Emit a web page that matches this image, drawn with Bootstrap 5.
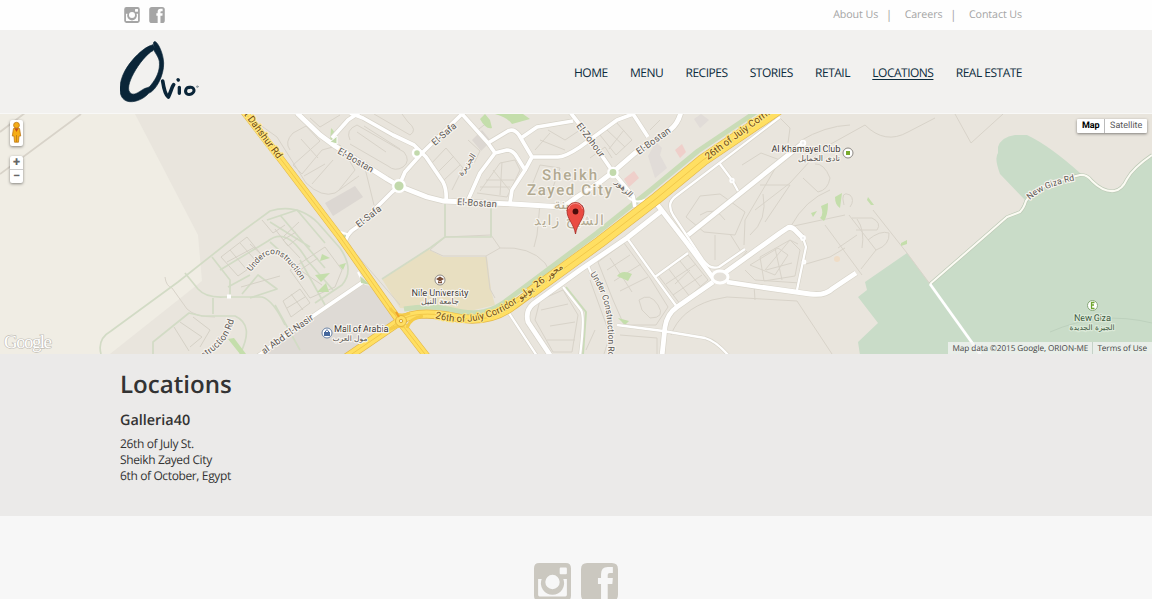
<!DOCTYPE html>
<html lang="en">
<head>
<meta charset="utf-8">
<meta name="viewport" content="width=device-width, initial-scale=1">
<title>Ovio - Locations</title>
<link href="https://cdn.jsdelivr.net/npm/bootstrap@5.3.0/dist/css/bootstrap.min.css" rel="stylesheet">
<style>
body{font-family:"Open Sans",sans-serif;background:#f7f7f7;color:#333;overflow:hidden;text-rendering:geometricPrecision}
a{color:inherit;text-decoration:none}
.wrap{max-width:936px}
.topbar{height:30px;background:#fefefe;color:#a5a5a5;font-size:10.7px;letter-spacing:-.1px}
.topbar .social{padding-left:4px;gap:9px}
.end-pad{padding-right:10px}
.sep{margin:-1px 12.5px 0 7.5px;font-size:12px}
.masthead{height:84px;background:#f2f1ef;border-bottom:1px solid #f8f8f7}
.mainnav{gap:22.3px;font-size:12px;color:#0c2b3d;padding-top:2px;letter-spacing:-.5px}
.mainnav .active{text-decoration:underline;text-underline-offset:1.5px}
.map{height:240px;background:#e9e5dd;overflow:hidden;font-family:Roboto,sans-serif}
.map>svg{display:block}
.places{height:162px;background:#ebeae9;padding-top:15px}
.places h1{font-size:24.1px;line-height:32px;font-weight:600;margin:0 0 12px}
.places h2{font-size:14.4px;line-height:18px;font-weight:600;margin:-1px 0 6px}
.places address{font-size:12px;line-height:16px;margin:0;letter-spacing:-.37px}
.foot{height:83px;padding-top:47px;gap:10px;color:#cbc8c0;overflow:hidden}
.ctl{background:#fff;border-radius:2px;box-shadow:0 1px 3px rgba(0,0,0,.45)}
.ctl-left{left:10px;top:6px;width:13px;gap:10px}
.zoomer{height:27px;color:#666;font:700 13px/13px Roboto,sans-serif}
.zoomer span+span{border-top:1px solid #ccc}
.maptype{right:5px;top:5px;height:14px;font-size:9px;line-height:15px;border-radius:1px;color:#565656}
.maptype span{padding:0 4.7px}
.maptype span:first-child{color:#000;border-right:1px solid #bbb}
.credit{right:0;bottom:0;height:12px;background:rgba(245,245,245,.72);font:8.2px/13px "Open Sans",sans-serif;letter-spacing:-.06px;color:#444;white-space:nowrap}
.credit span{padding:0 4px 0 4px}
.credit span+span{border-left:1px solid #c5d2c8;padding-right:5px}
.lbl{font-family:Roboto,"DejaVu Sans",sans-serif;font-size:9.4px;fill:#5a5652;stroke:#f6f3ee;stroke-width:2.4px;paint-order:stroke;stroke-linejoin:round}
.lbl .hw{fill:#6e4a16;stroke:#ffe680}
.lbl .ar{font-family:"DejaVu Sans",sans-serif;font-size:8px}
.lbl .city{font-size:15px;font-weight:500;fill:#b1a991}
.lbl .city-ar{font-family:"DejaVu Sans",sans-serif;font-size:14px;fill:#b1a991}
.lbl .poi{font-size:9.4px;fill:#3f3b38}
</style>
</head>
<body>
<svg width="0" height="0" class="position-absolute">
  <symbol id="ig" viewBox="0 0 36 37">
    <path fill="currentColor" fill-rule="evenodd" d="M5 0H31Q36 0 36 5V32Q36 37 31 37H5Q0 37 0 32V5Q0 0 5 0ZM26 4.500Q25 4.500 25 5.500V10Q25 11 26 11H31Q32 11 32 10V5.500Q32 4.500 31 4.500ZM4 15.500V31Q4 32.500 5.500 32.500H30.500Q32 32.500 32 31V15.500H28.500A11.300 11.300 0 1 1 7.500 15.500ZM18 11.500A7 7 0 1 0 18 25.500A7 7 0 1 0 18 11.500Z"/>
  </symbol>
  <symbol id="fb" viewBox="0 0 36 37">
    <path fill="currentColor" fill-rule="evenodd" d="M6 0H30Q36 0 36 6V31Q36 37 30 37H26V20.500H30.500L31 14.500H26V11.500Q26 9.800 28 9.800H31V4H26Q19.500 4 19.500 11V14.500H16.500V20.500H19.500V37H6Q0 37 0 31V6Q0 0 6 0Z"/>
  </symbol>
</svg>

<div class="topbar">
  <div class="container wrap h-100 d-flex justify-content-between align-items-center">
    <div class="social d-flex">
      <a href="#" class="d-flex" aria-label="Instagram"><svg width="16" height="16"><use href="#ig"/></svg></a>
      <a href="#" class="d-flex" aria-label="Facebook"><svg width="16" height="16"><use href="#fb"/></svg></a>
    </div>
    <div class="d-flex end-pad"><a href="#">About Us</a><span class="sep">|</span><a href="#">Careers</a><span class="sep">|</span><a href="#">Contact Us</a></div>
  </div>
</div>

<header class="masthead">
  <div class="container wrap h-100 d-flex justify-content-between align-items-center">
    <a href="#" class="d-flex" aria-label="Ovio">
      <svg width="82" height="64" viewBox="60 120 246 192" fill="none" stroke="#0a2538" stroke-linecap="round" stroke-linejoin="round">
        <path fill="#0a2538" stroke="#0a2538" stroke-width="2" d="M157 135C133 139 92 180 74 214C54 252 52 302 89 305C111 307 135 293 146 280C169 271 192 226 191 189C190 158 173 127 166 125C159 123 159 133 163 142C155 150 175 165 178 184C181 212 169 235 153 255C147 264 140 263 133 266C120 273 105 287 94 281C78 272 88 244 101 220C115 193 142 160 159 152C165 146 162 134 157 135Z"/>
        <path stroke-width="11" d="M188 243C191 263 196 285 205 291C211 280 216 260 221 254"/>
        <path stroke-width="10" d="M238 262V280M234 239L235 240"/>
        <path stroke-width="9" d="M270 262C258 260 253 274 260 281C269 287 283 280 282 270C281 263 275 260 267 263"/>
        <circle cx="292" cy="260" r="2.500" stroke-width="2" stroke="#687884"/>
      </svg>
    </a>
    <nav class="mainnav d-flex end-pad"><a href="#">HOME</a><a href="#">MENU</a><a href="#">RECIPES</a><a href="#">STORIES</a><a href="#">RETAIL</a><a href="#" class="active">LOCATIONS</a><a href="#">REAL ESTATE</a></nav>
  </div>
</header>

<section class="map position-relative">
  <svg width="1152" height="240" viewBox="0 114 1152 240" fill="none" stroke-linejoin="round">
    <defs>
      <g id="arterial">
        <path d="M297 113L320 135L335 146L387 179L399 186L427 197L443 201L513 204L563 207L577 197L600 182L613 172L635 153L670 130Q678 124 681 112"/>
        <path d="M713 278L687 243L653 199M660 212L627 238L580 270L533 304Q525 311 528 322L550 355"/>
        <path d="M723 274L780 233L786 229Q791 225 796 231L803 238M727 282L760 287L810 294Q825 296 832 289L856 273"/>
        <path d="M688 235L803 143M713 282L677 307Q667 314 665 327L662 356"/>
      </g>
      <g id="street">
        <path d="M332 138L348 120L360 112M350 113L363 118L393 135L414 145L426 157L443 182Q447 190 446 201"/>
        <path d="M464 112L422 153L405 172L399 186L392 192L357 227Q345 234 345 245"/>
        <path d="M462 114L488 143L495 153L507 150Q513 150 517 157L525 170L512 190L510 203M495 153L480 173L468 200"/>
        <path d="M488 143L508 131Q514 128 519 135L532 157L525 170M521 138L537 127L573 121M532 157H558Q565 157 580 147L617 120L633 114L648 137"/>
        <path d="M570 112L580 125L600 153L613 172L633 196L635 207M363 282L310 318L258 356"/>
      </g>
      <g id="lane">
        <path d="M627 238L655 277L677 307M655 277L688 253M803 238L806 247L797 290M563 287L581 310Q585 316 580 356"/>
        <path d="M780 117L676 196Q666 203 673 215L703 260Q710 270 719 267L745 249M720 164L732 180L738 191M617 325L663 331L705 338Q716 341 729 356M507 310L537 356M588 266L592 275"/>
      </g>
      <path id="hw1" d="M239 105L283 162L340 237L400 322L428 358"/>
      <path id="hw2" d="M346 358L400 321C410 313 430 313 448 316C480 324 500 316 514 305L600 242L657 198L703 160L780 108"/>
      <path id="p1" d="M236 104L290 176"/>
      <path id="p2" d="M337 153L382 179"/>
      <path id="p3" d="M359 228L396 199"/>
      <path id="p4" d="M435 146L466 119"/>
      <path id="p5" d="M457 205L510 208"/>
      <path id="p6" d="M576 126L605 164"/>
      <path id="p7" d="M639 155L684 123"/>
      <path id="p8" d="M708 160L792 98"/>
      <path id="p9" d="M435 318Q475 329 509 308Q516 304 530 293"/>
      <path id="p10" d="M590 274C603 294 610 306 608 366"/>
      <path id="p11" d="M251 272C270 246 280 246 306 288"/>
      <path id="p12" d="M185 370C222 349 229 338 234 320"/>
      <path id="p13" d="M238 373L314 319"/>
      <path id="p14" d="M1030 200Q1045 185 1084 179"/>
    </defs>

    <!-- land areas -->
    <path fill="#f0ede4" d="M0 114H135L198 235L202 281L110 354H0Z"/>
    <path fill="#dedad5" d="M363 284L374 288L398 322L350 356H260L310 320Z"/>
    <path fill="#e8dfc1" d="M382 279L428 249L443 257H487L491 290L495 305L470 311L400 308Z"/>
    <path fill="#c9dcc8" d="M907 253L865 282L867 290L858 297L878 323L858 342L860 355H1152V155L1132 172L1122 187Q1117 194 1103 190L1087 175L1080 173Q1050 146 1027 135H1015Q1001 137 998 147V153Q994 158 1000 174L1025 200L1020 212L1007 217L960 258L930 284Z"/>
    <path fill="#dcd7d2" d="M325 203L355 186L363 197L333 216ZM472 140L482 130L491 141L481 151Z"/>
    <path fill="#efcfca" d="M624 179L634 171L639 178L629 187ZM675 150L682 144L686 152L680 158Z"/>
    <path fill="#e1dcd8" d="M648 156L656 142L662 148L660 155L667 168L655 178ZM694 119L701 114L709 120L700 128Z"/>

    <!-- tracks and plot outlines -->
    <g stroke="#d8d3c9" stroke-width="1">
      <path stroke-width="1.800" d="M0 132L25 113M0 174L81 114"/>
      <path d="M165 277Q166 286 172 288L187 309Q195 317 215 317M955 114L971 143L1003 114M865 125Q885 145 908 132L935 118"/>
      <path d="M245 114L277 137L306 183Q322 198 335 193L359 176M290 150Q284 142 293 133L306 126L320 141L293 165L302 174L322 150L340 145L355 170L339 190M301 139L318 158M312 184L333 160M304 176L325 164M363 160L374 205M350 140Q345 130 357 125L404 152Q411 161 403 167Q395 172 388 166L350 144M357 132L386 152M364 126L400 149"/>
      <path d="M310 118L320 127L340 115M374 114L410 135Q418 130 408 122L402 114"/>
      <path d="M350 247L400 305M445 204V237L491 235V206M445 237L430 250L443 256H486L500 248L491 235M500 248Q530 246 545 263L550 272L515 300M486 256L490 289L495 298M540 204L537 235L534 247"/>
      <path d="M430 165L446 148L463 168L452 190M437 173L454 156M444 180L460 165M475 132L488 122M468 140L480 151L474 163"/>
      <path d="M480 191L500 163L515 160L520 170L507 197L477 193M486 180L514 180M493 170L511 192M502 162L500 195M480 187H510M540 165L560 168L552 190L530 190ZM548 130L565 140L580 130M540 140L565 150M535 150L550 133"/>
      <path d="M600 135L616 122L632 140L616 155ZM607 130L625 147M624 130L609 149M590 158L605 147L612 158M650 130L660 120"/>
      <path d="M540 300L563 290L578 315L572 352H553L535 320ZM541 310L568 304M550 326L575 322M547 340H575M598 262L624 243L650 278L668 307L656 325H624L613 300ZM607 270L630 255M614 281L641 264M620 291L648 277M610 258L632 292M639 300Q650 292 658 305T650 318L642 310ZM590 280L610 335L604 354M620 335L657 338V354M586 350L595 330"/>
      <path d="M658 275L688 255L708 280L680 304ZM666 284L696 264M673 295L702 275M668 268L690 297M680 261L700 286M690 270L675 284"/>
      <path d="M671 335Q680 310 712 300L727 297L797 301L832 354M686 217L700 196L720 194L745 212L735 235L704 232ZM700 215Q715 205 725 220M715 235V260M730 234L740 250M742 165L761 153L780 160L765 186M763 194Q768 220 750 235M755 210L790 183L820 150L865 125M765 186L745 220L744 245M760 185H790L765 222M750 265L778 248L788 255L775 275ZM745 270L755 280L800 283M765 270L790 240L798 244M754 285L755 300M733 268L747 251"/>
      <path d="M776 114L790 128L788 143M800 141Q825 126 850 125M815 164Q824 163 830 178Q828 190 818 192L803 178M791 226Q805 200 830 190M789 227L845 215M825 225L862 275M838 248L857 235M857 219Q865 230 862 248M844 205Q840 190 850 195Q855 200 850 207M849 215L876 250L861 269M852 218H872Q882 223 877 230H856M873 210L907 253L930 284M876 250Q890 245 889 233Q880 230 868 240M760 257L790 240L800 250L795 276L764 281ZM766 270L792 263M775 248L782 280M806 264L830 257L845 248"/>
    </g>

    <!-- residential lanes with verges -->
    <g stroke="#d2dbc5" stroke-width="1.700">
      <path d="M101 354Q97 339 111 331L178 282L240 233L270 211Q298 203 318 223L340 248Q355 270 342 285L315 303M185 273L198 289Q206 298 224 297L262 297Q273 300 285 325M212 257L230 280V297M153 354V342L189 313L202 316H235Q255 325 240 354M213 298V314"/>
      <path d="M220 270L268 241Q287 226 307 260L333 290M228 287L250 275M267 220L297 210L325 243M270 242L290 260M280 215L325 268M270 222L310 247M242 294L258 275L277 289L250 298M300 260L325 305M275 305L300 350"/>
      <path d="M445 204V237H491V206M382 279L430 248M445 237L430 248"/>
    </g>
    <g stroke="#d5d1c6" stroke-width="1">
      <path d="M221 257L247 237L264 258L238 276ZM230 250L247 270M240 243L257 262M227 262L255 247M290 270L325 247L342 270L335 287L310 298ZM283 301L300 289L310 303L291 317ZM291 294L303 310M287 308L305 297M174 327L189 351M180 322L202 337L190 347M193 317L210 330L200 347M241 287L280 276M296 232L283 240L300 258M318 258L300 270L322 285"/>
      <path d="M262 220L273 233L285 225M250 244L262 255M275 229L288 246L298 238M299 222L284 236"/>
    </g>
    <g fill="#c4deab">
      <path d="M322 254L330 258L320 261ZM315 275L330 273L321 282ZM317 292L326 283L329 292ZM339 265L346 263L343 270ZM331 128Q337 133 334 141L330 143ZM480 119Q486 130 492 128L490 120L485 114ZM495 114Q507 117 512 124L530 119L523 114ZM228 339L240 354H246L234 338Z"/>
      <path d="M835 197L842 193L840 208Q835 205 835 197ZM821 206L828 203Q828 215 824 221L820 218Q824 215 821 206ZM868 197L874 205L871 205L867 200ZM901 243L907 240V244L901 246ZM811 213L817 211L813 217ZM617 276Q622 269 632 274L628 281ZM618 318L629 321L625 325Z"/>
    </g>
    <circle cx="837" cy="259" r="3" fill="#efdcc6"/>

    <!-- green verge of the corridor -->
    <path stroke="#c9dcb7" stroke-width="5" d="M404 309Q430 305 448 309C478 317 493 312 510 298L597 233L652 189L698 151L756 112"/>
    <path stroke="#c9dcb7" stroke-width="2" d="M566 287L586 312L583 354"/>

    <!-- white roads: casing first, then surface -->
    <g stroke="#d8d4ca"><use href="#lane" stroke-width="3.600"/><use href="#street" stroke-width="5"/><use href="#arterial" stroke-width="6.200"/></g>
    <g stroke="#fff"><use href="#lane" stroke-width="2.300"/><use href="#street" stroke-width="3.700"/><use href="#arterial" stroke-width="4.800"/></g>
    <path stroke="#fff" stroke-width="2" d="M337 231L350 235M363 282L358 272M364 283L374 285M628 197Q635 204 645 200"/>
    <g fill="#c2d9ac" stroke="#fff" stroke-width="2.400"><circle cx="399" cy="186" r="5.800"/><circle cx="613" cy="172.500" r="4.600"/><circle cx="417" cy="153" r="4"/><path d="M330 142L337 136V144Z" stroke-width="1"/><path d="M341 236L346 235L344 242ZM361 283L370 285L360 276Z" stroke="none"/></g>
    <ellipse cx="720" cy="277" rx="8" ry="6" fill="#e5e1da" stroke="#fff" stroke-width="3"/>
    <g fill="#eee" stroke="#fff" stroke-width="1.800"><circle cx="803" cy="143" r="2.300"/><circle cx="803" cy="238" r="2"/><circle cx="804" cy="262" r="1.500"/><circle cx="732" cy="180.500" r="1.800"/></g>
    <path fill="#fff" d="M227 294.500H231V298.500H227Z"/>
    <path stroke="#bdc9b6" stroke-width="3.400" d="M930 284L960 258L1007 217L1020 212Q1024 208 1026 201C1034 187 1055 181 1080 175Q1087 174 1092 181Q1103 192 1114 191Q1122 190 1127 179Q1133 168 1152 155"/>
    <path stroke="#fbfbf3" stroke-width="2.100" d="M930 284L960 258L1007 217L1020 212Q1024 208 1026 201C1034 187 1055 181 1080 175Q1087 174 1092 181Q1103 192 1114 191Q1122 190 1127 179Q1133 168 1152 155"/>
    <path stroke="#fff" stroke-width="2.800" d="M930 284L983 358"/>
    <path stroke="#bdd1bd" d="M1050 332Q1100 310 1152 323"/>

    <!-- highways -->
    <g stroke="#e3b84a"><use href="#hw1" stroke-width="7.600"/><use href="#hw2" stroke-width="9"/><path stroke-width="12" d="M530 293L600 242L657 198L703 160L780 108"/></g>
    <g stroke="#ffdf62"><use href="#hw1" stroke-width="6.400"/><use href="#hw2" stroke-width="7.600"/><path stroke-width="10.800" d="M530 293L600 242L657 198L703 160L780 108"/></g>
    <g stroke="#f2c84a" stroke-width="1"><use href="#hw1"/><use href="#hw2"/></g>
    <path stroke="#f5cc49" stroke-width="3" d="M390 308Q397 319 410 313M388 330Q401 324 404 327M407 328Q410 318 423 316"/>
    <circle cx="401" cy="321" r="5.500" fill="#ffdf62" stroke="#e5b63d"/><circle cx="401" cy="321" r="1.700" fill="#f3eac5" stroke="#dca934"/>
    <path stroke="#f0a22a" stroke-width="2" d="M396 312L399 317"/>

    <!-- labels -->
    <g class="lbl">
      <text class="hw" style="font-size:9.800px"><textPath href="#p1" startOffset="8">st Dahshur Rd</textPath></text>
      <text><textPath href="#p2">El-Bostan</textPath></text>
      <text><textPath href="#p3">El-Safa</textPath></text>
      <text><textPath href="#p4">El-Safa</textPath></text>
      <text><textPath href="#p5">El-Bostan</textPath></text>
      <text><textPath href="#p6">El-Zohour</textPath></text>
      <text><textPath href="#p7">El-Bostan</textPath></text>
      <text class="hw" style="font-size:9.800px"><textPath href="#p8">26th of July Corrido</textPath></text>
      <text class="hw" style="font-size:9.600px"><textPath href="#p9">26th of July Corridor</textPath></text>
      <text style="font-size:8.600px"><textPath href="#p10">Under Construction Rd</textPath></text>
      <text style="font-size:8.400px"><textPath href="#p11">Underconstruction</textPath></text>
      <text><textPath href="#p12" startOffset="100%" text-anchor="end">struction Rd</textPath></text>
      <text><textPath href="#p13" startOffset="100%" text-anchor="end">al Abd El-Nasir</textPath></text>
      <text style="font-size:8.800px"><textPath href="#p14">New Giza Rd</textPath></text>
      <text class="ar hw" transform="translate(542 284) rotate(-37)" text-anchor="middle" style="font-size:9px">محور 26 يوليو</text>
      <text class="ar" transform="translate(622 190) rotate(45)" text-anchor="middle">الزهور</text>
      <text class="ar" transform="translate(469 166) rotate(-56)" text-anchor="middle">الجزيرة</text>
      <text class="city" x="542" y="180" textLength="55">Sheikh</text>
      <text class="city" x="527" y="195" textLength="85">Zayed City</text>
      <text class="city-ar" x="569" y="209" text-anchor="middle">مدينة</text>
      <text class="city-ar" x="569" y="225" text-anchor="middle" textLength="70">الشيخ زايد</text>
      <text class="poi" x="771.500" y="152" textLength="69">Al Khamayel Club</text>
      <text class="ar" x="819" y="161" text-anchor="middle">نادى الخمايل</text>
      <text class="poi" x="411.500" y="296" textLength="57">Nile University</text>
      <text class="ar" x="440" y="304" text-anchor="middle">جامعة النيل</text>
      <text class="poi" x="334" y="332" textLength="54.500">Mall of Arabia</text>
      <text class="ar" x="350" y="341" text-anchor="middle" style="font-size:7.500px">مول العرب</text>
      <g style="stroke:#dbe9d8"><text class="poi" x="1074" y="321" textLength="37" style="fill:#3f5b42">New Giza</text>
      <text class="ar" x="1092" y="329.500" text-anchor="middle" style="fill:#3f5b42;font-size:7.500px">الجيزة الجديدة</text></g>
    </g>

    <!-- place icons -->
    <g fill="#fff" stroke="#8d8984"><circle cx="848" cy="153" r="5"/><circle cx="440" cy="280" r="5"/><circle cx="327" cy="333" r="5" stroke="#6b83a5"/><circle cx="1092.500" cy="305.500" r="5" stroke="#87a878"/></g>
    <path fill="#7aaa2b" d="M846 151H850V155H846Z"/>
    <path fill="#7a4d36" d="M436 279L440 276.500L444 279L440 281.500ZM438 281L440 282.200L442 281V283.300H438Z"/>
    <path fill="#45679d" d="M324 332H330V336H324Z"/><path stroke="#45679d" d="M325.500 332V331Q327 328.500 328.500 331V332"/>
    <path stroke="#6fa52e" stroke-width="1.300" d="M1094.500 302.500H1091.500V308.500H1094.500M1092 305H1094"/>

    <!-- marker -->
    <path fill="#ea4b42" stroke="#a52b25" stroke-width=".8" d="M575.500 234C574 224 567 219 567 211A8.500 8.500 0 0 1 584 211C584 219 577 224 575.500 234Z"/>
    <path stroke="#f5a29b" stroke-width=".8" d="M568.500 209A7.200 7.200 0 0 1 582.500 209"/>
    <circle cx="575.500" cy="211.500" r="2.900" fill="#4a0d0b"/>
    <text x="4" y="348" font-family="Liberation Serif, serif" font-size="19" textLength="48" fill="#fff" stroke="#c2beb6" stroke-width="1.300" paint-order="stroke">Google</text>
  </svg>

  <div class="ctl-left position-absolute d-flex flex-column">
    <div class="ctl d-flex justify-content-center">
      <svg width="13" height="26" viewBox="0 0 13 26" fill="#f5ad16" stroke="#bd791a" stroke-width=".8"><circle cx="6.500" cy="5.200" r="2.900"/><path d="M3.500 8.500H9.500L10.700 16H9L8.500 22.200H4.500L4 16H2.300Z"/><path fill="#c85016" stroke="none" d="M4.500 8.500H8.500L6.500 12Z"/><path d="M6.500 15V22"/></svg>
    </div>
    <div class="ctl zoomer d-flex flex-column text-center"><span>+</span><span>−</span></div>
  </div>
  <div class="ctl maptype position-absolute d-flex"><span class="fw-bold">Map</span><span>Satellite</span></div>
  <div class="credit position-absolute d-flex"><span>Map data ©2015 Google, ORION-ME</span><span>Terms of Use</span></div>
</section>

<main class="places">
  <div class="container wrap">
    <h1>Locations</h1>
    <h2>Galleria40</h2>
    <address>26th of July St.<br>Sheikh Zayed City<br>6th of October, Egypt</address>
  </div>
</main>

<footer class="foot d-flex justify-content-center align-items-start">
  <a href="#" aria-label="Instagram"><svg class="d-block" width="37" height="38"><use href="#ig"/></svg></a>
  <a href="#" aria-label="Facebook"><svg class="d-block" width="37" height="38"><use href="#fb"/></svg></a>
</footer>
<script src="https://cdn.jsdelivr.net/npm/bootstrap@5.3.0/dist/js/bootstrap.bundle.min.js"></script>
</body>
</html>
